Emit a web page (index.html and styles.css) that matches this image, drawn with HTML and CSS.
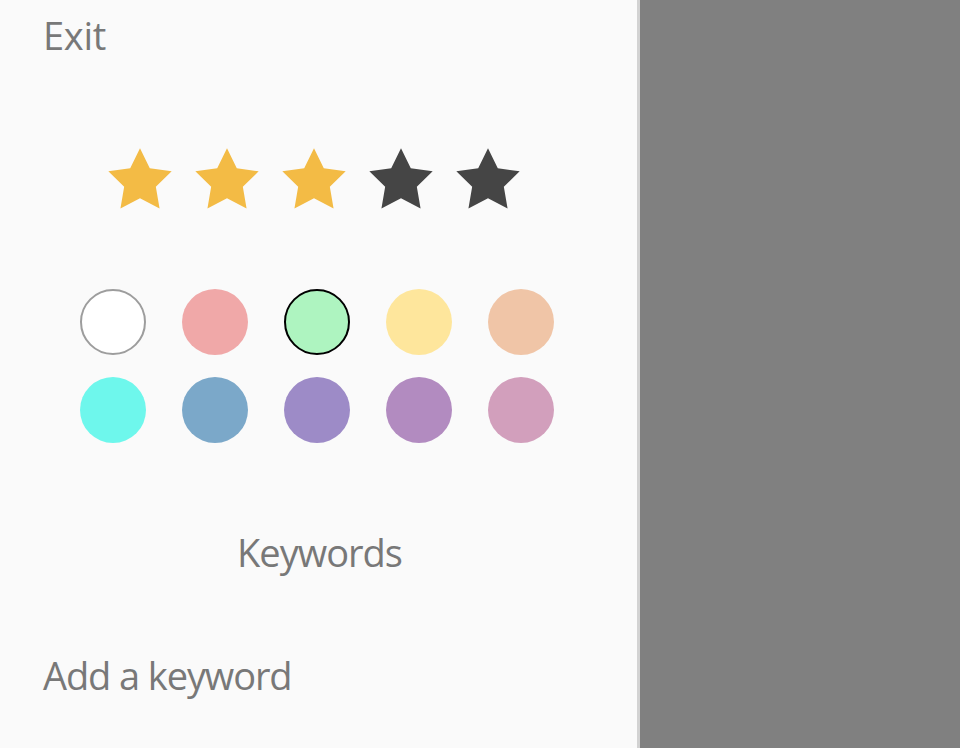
FILE: index.html
```html
<!DOCTYPE html>
<html>
<head>
<meta charset="utf-8">
<link rel="stylesheet" href="styles.css">
</head>
<body>
<div class="panel">
  <div class="exit">Exit</div>
  <div class="stars">
    <svg class="star on" viewBox="0 0 24 24"><polygon points="12,2 15.09,8.26 22,9.27 17,14.14 18.18,21.02 12,17.77 5.82,21.02 7,14.14 2,9.27 8.91,8.26"/></svg>
    <svg class="star on" viewBox="0 0 24 24"><polygon points="12,2 15.09,8.26 22,9.27 17,14.14 18.18,21.02 12,17.77 5.82,21.02 7,14.14 2,9.27 8.91,8.26"/></svg>
    <svg class="star on" viewBox="0 0 24 24"><polygon points="12,2 15.09,8.26 22,9.27 17,14.14 18.18,21.02 12,17.77 5.82,21.02 7,14.14 2,9.27 8.91,8.26"/></svg>
    <svg class="star off" viewBox="0 0 24 24"><polygon points="12,2 15.09,8.26 22,9.27 17,14.14 18.18,21.02 12,17.77 5.82,21.02 7,14.14 2,9.27 8.91,8.26"/></svg>
    <svg class="star off" viewBox="0 0 24 24"><polygon points="12,2 15.09,8.26 22,9.27 17,14.14 18.18,21.02 12,17.77 5.82,21.02 7,14.14 2,9.27 8.91,8.26"/></svg>
  </div>
  <div class="colors">
    <div class="dot c-white"></div>
    <div class="dot c-pink"></div>
    <div class="dot c-green selected"></div>
    <div class="dot c-yellow"></div>
    <div class="dot c-peach"></div>
    <div class="dot c-cyan"></div>
    <div class="dot c-blue"></div>
    <div class="dot c-purple"></div>
    <div class="dot c-violet"></div>
    <div class="dot c-mauve"></div>
  </div>
  <div class="keywords">Keywords</div>
  <div class="add">Add a keyword</div>
</div>
</body>
</html>
```
FILE: styles.css
```css
html, body {
  margin: 0;
  padding: 0;
  background: #808080;
  height: 748px;
  overflow: hidden;
}
.panel {
  width: 637px;
  height: 748px;
  background: #fafafa;
  border-right: 3px solid #d2d2d2;
  display: flex;
  flex-direction: column;
  font-family: "Open Sans", "Noto Sans", sans-serif;
  color: #787878;
}
.exit {
  margin: 16px 0 0 43px;
  font-size: 38px;
  line-height: 38px;
  letter-spacing: -0.3px;
}
.stars {
  display: flex;
  gap: 11px;
  padding-left: 102px;
  margin-top: 88px;
}
.star {
  width: 76px;
  height: 76px;
  display: block;
}
.star.on { fill: #f3bb45; }
.star.off { fill: #454545; }
.colors {
  display: grid;
  grid-template-columns: repeat(5, 66px);
  column-gap: 36px;
  row-gap: 22px;
  padding-left: 80px;
  margin-top: 71px;
}
.dot {
  width: 66px;
  height: 66px;
  border-radius: 50%;
  box-sizing: border-box;
}
.c-white { background: #ffffff; border: 2.5px solid #9d9d9d; }
.c-pink { background: #f0a8a8; }
.c-green { background: #aef4c0; }
.c-green.selected { border: 2.7px solid #000; }
.c-yellow { background: #fee69c; }
.c-peach { background: #f0c5a7; }
.c-cyan { background: #6ef7ec; }
.c-blue { background: #7ba8c9; }
.c-purple { background: #9d8bc7; }
.c-violet { background: #b28bc0; }
.c-mauve { background: #d29fbc; }
.keywords {
  margin-top: 90px;
  text-align: center;
  font-size: 38px;
  line-height: 38px;
  letter-spacing: -1px;
  padding-left: 2px;
}
.add {
  margin: 85px 0 0 43px;
  font-size: 38px;
  line-height: 38px;
  letter-spacing: -1.1px;
}
```
